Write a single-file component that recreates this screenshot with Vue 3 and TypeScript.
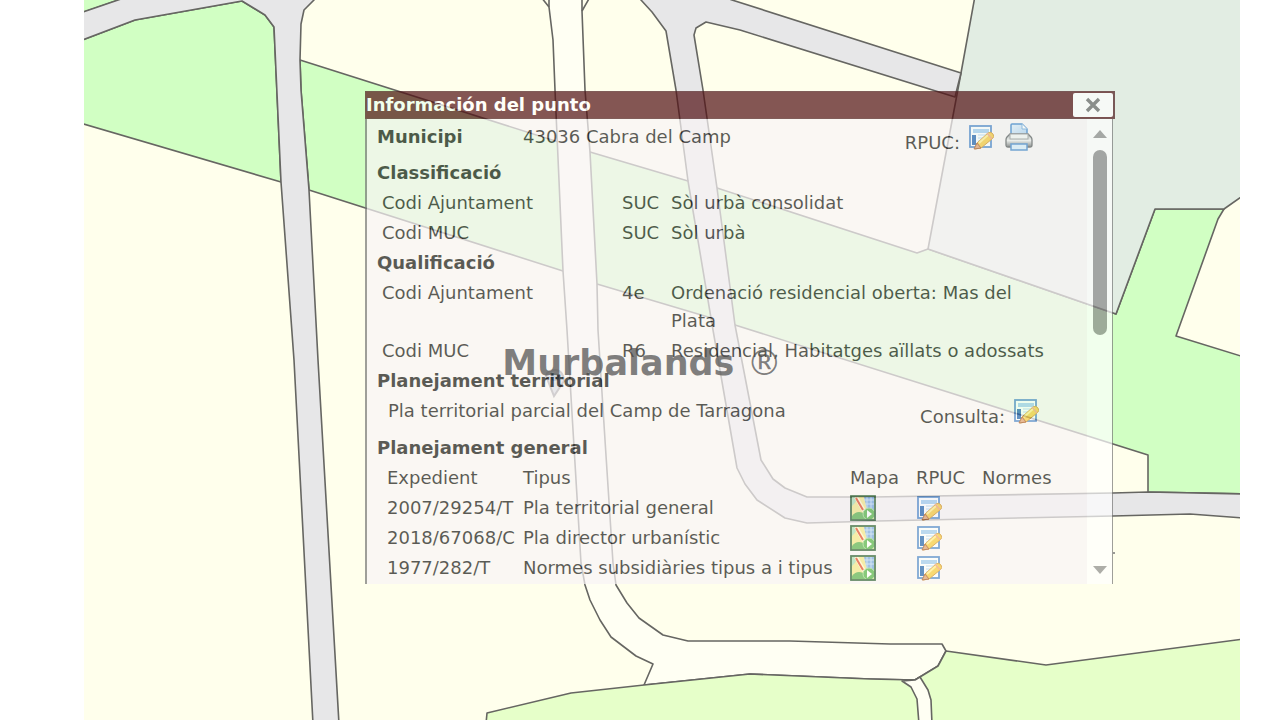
<script setup lang="ts">
import { ref } from 'vue'

interface CodeRow { label: string; code: string; text: string }
interface Plan { id: string; kind: string }

const open = ref(true)

const classification: CodeRow[] = [
  { label: 'Codi Ajuntament', code: 'SUC', text: 'Sòl urbà consolidat' },
  { label: 'Codi MUC', code: 'SUC', text: 'Sòl urbà' },
]
const qualification: CodeRow[] = [
  { label: 'Codi Ajuntament', code: '4e', text: 'Ordenació residencial oberta: Mas del Plata' },
  { label: 'Codi MUC', code: 'R6', text: 'Residencial, Habitatges aïllats o adossats' },
]
const sections = [
  { title: 'Classificació', rows: classification },
  { title: 'Qualificació', rows: qualification },
]
const plans: Plan[] = [
  { id: '2007/29254/T', kind: 'Pla territorial general' },
  { id: '2018/67068/C', kind: 'Pla director urbanístic' },
  { id: '1977/282/T', kind: 'Normes subsidiàries tipus a i tipus' },
]
</script>

<template>
  <main class="page">
    <svg class="defs" aria-hidden="true">
      <defs>
        <linearGradient id="paper" x1="0" y1="0" x2="1" y2="1">
          <stop offset="0" stop-color="#e4f1fd" />
          <stop offset="1" stop-color="#a9cdf0" />
        </linearGradient>
        <linearGradient id="metal" x1="0" y1="0" x2="0" y2="1">
          <stop offset="0" stop-color="#a5a7aa" />
          <stop offset="0.5" stop-color="#eeeeee" />
          <stop offset="1" stop-color="#66686b" />
        </linearGradient>
        <symbol id="icon-form" viewBox="0 0 26 26">
          <rect x="2" y="2" width="21" height="21" fill="#fbfdff" stroke="#4c86ca" stroke-width="1.8" />
          <rect x="5" y="5" width="16" height="4" fill="#a0cbf1" />
          <rect x="4" y="11" width="4" height="10" fill="#2565b0" />
          <path d="M10 11h11M10 14h6M10 17h4" stroke="#d5e8f8" stroke-width="2" />
          <path d="M7 25l2-6 11-10q3-2 5 1t-1 5L13 24z" fill="#f6c93f" stroke="#cf922c" />
          <path d="M11 19l10-9" stroke="#ffec90" stroke-width="2" />
          <path d="M6 25l3-6 4 5z" fill="#e0a070" stroke="#a85a28" />
          <path d="M19 9l5 6" stroke="#f0a07a" stroke-width="1.5" />
        </symbol>
        <symbol id="icon-print" viewBox="0 0 28 28">
          <path d="M6 12V2q0-1 1-1h10l5 5v6z" fill="url(#paper)" stroke="#3c83cc" stroke-width="1.5" />
          <path d="M17 1v5h5" fill="#fff" stroke="#6da6dc" />
          <path d="M5 11h18l3 3q1 1 1 3v5q0 2-2 2H3q-2 0-2-2v-5q0-2 1-3z" fill="url(#metal)" stroke="#5c5e61" stroke-width="1.3" />
          <rect x="5" y="11" width="18" height="5" fill="#f2f3f4" stroke="#929496" />
          <rect x="6" y="21" width="16" height="6" fill="#d9ecfc" stroke="#4587cb" stroke-width="1.5" />
        </symbol>
        <symbol id="icon-map" viewBox="0 0 26 26">
          <rect x="1" y="1" width="24" height="24" fill="#f2e68c" />
          <path d="M14 2h10v13l-7-1z" fill="#78a9e2" />
          <path d="M17 2v12M21 2v12M14 5h10M15 9h9" stroke="#c3dbf5" stroke-width="1" />
          <path d="M2 2h6l-3 6-3 3z" fill="#a9dbb6" />
          <path d="M2 24v-3q3-4 7-4t6 3l1 4z" fill="#5eb151" />
          <path d="M6 2l8 14" stroke="#fff6d2" stroke-width="4" />
          <path d="M6 3l7 12" stroke="#e04c2c" stroke-width="2" />
          <circle cx="19" cy="19" r="6" fill="#57b34a" stroke="#a4dd96" />
          <path d="M17 15v8l5-4z" fill="#fff" />
          <rect x="1" y="1" width="24" height="24" fill="none" stroke="#285c32" stroke-width="1.8" />
        </symbol>
      </defs>
    </svg>

    <section class="map" aria-label="Mapa">
      <svg class="map-drawing" viewBox="84 0 1156 720" preserveAspectRatio="xMinYMin slice" aria-hidden="true">
        <rect x="84" width="1156" height="720" fill="#ffffec" />
        <g stroke="#666662" stroke-width="1.6" stroke-linejoin="round">
          <path fill="#d1ffc3" d="M80-4H130L80 13.500Z" />
          <path fill="#d1ffc3" d="M80 41L135 20L242 1L265 15L274 27L281 182L80 123Z" />
          <path fill="#d1ffc3" d="M300 60L590 152L688 181L717 188L917 253L928 249L1116 314L1155 209H1224L1218 219L1176 336L1244 357V494L1148 492V455L735 325L597 284L563 271L309 190L301 90Z" />
          <path fill="#e2ede3" d="M975-4L961 73L928 249L1116 314L1155 209H1224L1244 195V-4Z" />
          <path fill="#e7e7e8" d="M80 13L121 -1V-6H318L314 0L304 10L301 24L300 60L301 90L309 190L318 360L339 724H313L294 360L281 182L274 27L265 15L242 1L135 20L80 41Z" />
          <path fill="#e7e7e8" d="M636-6L641 0L652 12L666 31L676 90L688 181L713 330L737 468L745 484L757 500L785 518L807 523L877 521L1113 516L1190 514L1244 518V494L1148 492L1113 493L873 497L807 497L785 488L773 479L761 460L735 325L717 188L703 90L694 35L696 28L706 22L740 30L955 97L961 73L732 0L715-6Z" />
          <path fill="#fffff3" d="M549-4V7L553 40L555 90L563 271L567 330L573 430L581 563L585 585L590 600L600 620L611 637L636 656L653 664L644 685L750 674L870 679L915 680L938 666L946 651L942 644L890 644L790 641H688L663 635L639 618L627 603L616 585L613 563L605 440L598 330L597 284L590 152L585 90L582 11V-4Z" />
          <path fill="none" d="M541-3L549 7M590-3L582 11" />
          <path fill="#e6ffc9" d="M486 724L487 713L571 693L644 685L750 674L870 679L915 680L938 666L946 651L1046 665L1244 639V724Z" />
          <path fill="#fffff3" d="M902 681L911 687L917 699L919 724H932L931 700L928 690L920 677L915 680Z" />
        </g>
        <path d="M546 376L554 396L564 381Q563 370 555 370T546 376Z" fill="#c5cbd0" stroke="#777" stroke-width="2" />
        <circle cx="555" cy="377" r="4" fill="#62809c" />
        <circle cx="1114" cy="553" r="1" fill="#777" />
      </svg>

      <section v-if="open" class="dialog" aria-labelledby="dialog-title">
        <header class="titlebar">
          <h1 id="dialog-title">Información del punto</h1>
          <button class="close" type="button" aria-label="Tancar" @click="open = false">
            <svg viewBox="0 0 16 16"><path d="M2 2l12 12M14 2L2 14" fill="none" stroke="#666" stroke-width="3.4" /></svg>
          </button>
        </header>

        <div class="body">
          <div class="content">
            <div class="town">
              <h2>Municipi</h2>
              <span>43036 Cabra del Camp</span>
              <div class="actions">
                <span class="action-label">RPUC:</span>
                <button class="icon" type="button" aria-label="RPUC"><svg><use href="#icon-form" /></svg></button>
                <button class="icon print" type="button" aria-label="Imprimir"><svg><use href="#icon-print" /></svg></button>
              </div>
            </div>

            <template v-for="s in sections" :key="s.title">
              <h2>{{ s.title }}</h2>
              <table class="codes">
                <tbody>
                  <tr v-for="r in s.rows" :key="r.label">
                    <th scope="row">{{ r.label }}</th>
                    <td class="code">{{ r.code }}</td>
                    <td class="desc">{{ r.text }}</td>
                  </tr>
                </tbody>
              </table>
            </template>

            <h2>Planejament territorial</h2>
            <div class="territorial">
              <span>Pla territorial parcial del Camp de Tarragona</span>
              <div class="actions">
                <span class="action-label">Consulta:</span>
                <button class="icon" type="button" aria-label="Consulta"><svg><use href="#icon-form" /></svg></button>
              </div>
            </div>

            <h2>Planejament general</h2>
            <table class="plans">
              <thead>
                <tr>
                  <th class="id" scope="col">Expedient</th>
                  <th scope="col">Tipus</th>
                  <th class="tool" scope="col">Mapa</th>
                  <th class="tool" scope="col">RPUC</th>
                  <th class="rules" scope="col">Normes</th>
                </tr>
              </thead>
              <tbody>
                <tr v-for="p in plans" :key="p.id">
                  <td>{{ p.id }}</td>
                  <td>{{ p.kind }}</td>
                  <td><button class="icon" type="button" aria-label="Mapa"><svg><use href="#icon-map" /></svg></button></td>
                  <td><button class="icon" type="button" aria-label="RPUC"><svg><use href="#icon-form" /></svg></button></td>
                  <td></td>
                </tr>
              </tbody>
            </table>
          </div>

          <div class="scrollbar" aria-hidden="true">
            <span class="arrow up"></span>
            <div class="track"><span class="thumb"></span></div>
            <span class="arrow down"></span>
          </div>
        </div>
      </section>

      <p class="watermark">Murbalands <span class="mark">®</span></p>
    </section>
  </main>
</template>

<style>
body { margin: 0; background: #fff; }
</style>

<style scoped>
.page { min-height: 100vh; padding: 0 40px 0 84px; display: flex; font: 18px/30px "DejaVu Sans", Verdana, sans-serif; color: #151515; box-sizing: border-box; }
.defs { position: absolute; width: 0; height: 0; }
.map { position: relative; flex: 1; overflow: hidden; background: #ffffec; }
.map-drawing { position: absolute; inset: 0; width: 100%; height: 100%; }
h1, h2, p { margin: 0; }
.dialog { position: absolute; top: 91px; left: 281px; right: 125px; opacity: 0.7; }
.titlebar { display: flex; align-items: center; justify-content: space-between; height: 28px; background: #511013; box-sizing: border-box; border: 1px solid #4c1a1c; border-right-width: 2px; }
h1 { font-size: 18px; color: #fff; white-space: nowrap; }
.close { width: 40px; height: 24px; padding: 0; border: 0; border-radius: 2px; background: #fff; display: flex; align-items: center; justify-content: center; }
.close svg { width: 16px; height: 16px; }
.body { display: flex; margin-right: 2px; border: solid #777; border-width: 0 1px 0 2px; background: #f9f5f6; }
.content { flex: 1; min-width: 0; padding-bottom: 1px; }
h2 { font-size: 18px; line-height: 30px; padding-left: 10px; white-space: nowrap; }
.town { display: flex; height: 36px; align-items: center; margin-bottom: 3px; white-space: nowrap; }
.town h2 { flex: none; width: 156px; box-sizing: border-box; }
.actions { margin-left: auto; display: flex; align-items: center; }
.town .actions { padding-right: 54px; }
.action-label { padding-top: 12px; }
.icon { display: block; width: 26px; height: 26px; padding: 0; border: 0; background: none; }
.icon svg { display: block; width: 100%; height: 100%; }
.actions .icon { margin-left: 8px; }
.actions .print { width: 28px; height: 28px; margin-left: 11px; }
table { border-collapse: collapse; table-layout: fixed; }
th { font-weight: normal; text-align: left; }
th, td { padding: 0; vertical-align: top; }
.codes { width: calc(100% - 40px); margin-left: 15px; }
.codes th { width: 240px; }
.codes td, .codes th { padding: 1px 0; line-height: 28px; }
.code { width: 49px; }
.territorial { display: flex; height: 37px; padding: 0 48px 0 21px; }
.territorial .actions { align-items: flex-start; }
.territorial .action-label { padding-top: 6px; }
.territorial .icon { margin-top: 2px; }
.plans { width: calc(100% - 20px); margin-left: 20px; white-space: nowrap; }
.plans .id { width: 136px; }
.plans .tool { width: 66px; }
.plans .rules { width: 105px; }
.plans .icon { margin-top: 2px; }
.scrollbar { width: 25px; flex: none; background: #fff; display: flex; flex-direction: column; align-items: center; padding: 11px 0 10px; box-sizing: border-box; }
.arrow { width: 0; height: 0; border: solid transparent; border-width: 0 7px; }
.up { border-bottom: 8px solid #8c8c8c; }
.down { border-top: 8px solid #8c8c8c; }
.track { flex: 1; padding-top: 12px; }
.thumb { display: block; width: 14px; height: 185px; border-radius: 7px; background: #888; }
.watermark { position: absolute; top: 342px; left: 0; right: 40px; text-align: center; font-size: 35px; line-height: 42px; font-weight: bold; color: rgba(80, 80, 80, 0.72); pointer-events: none; }
.mark { font-weight: normal; }
</style>
